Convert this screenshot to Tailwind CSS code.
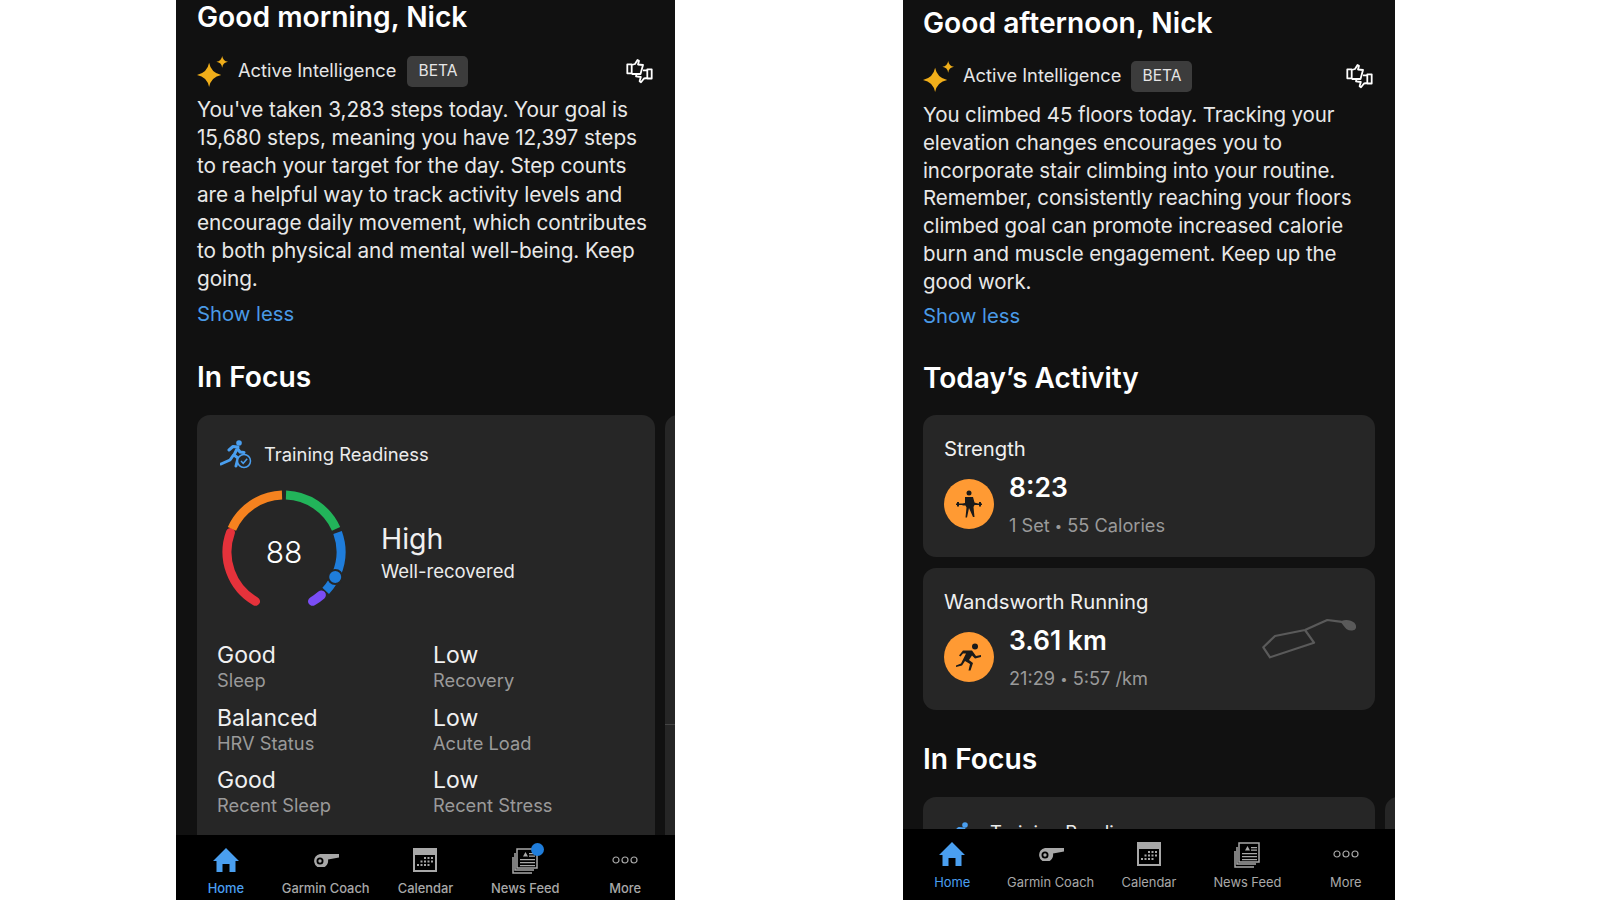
<!DOCTYPE html>
<html lang="en">
<head>
    <meta charset="UTF-8">
    <meta name="viewport" content="width=device-width, initial-scale=1.0">
    <title>Garmin Connect Active Intelligence</title>
    <script src="https://cdn.jsdelivr.net/npm/@tailwindcss/browser@4"></script>
</head>
<body class="bg-white font-['Inter',sans-serif] overflow-hidden">
    <!-- shared icons -->
    <svg class="hidden">
        <symbol id="sparkle" viewBox="0 0 32 32">
            <path fill="#f0ae1a" d="M12.500 7Q14.500 17.500 25 19.500Q14.500 21.500 12.500 32Q10.500 21.500 0 19.500Q10.500 17.500 12.500 7Z"/>
            <path fill="#f0ae1a" d="M26 0Q26.800 5.200 32 6Q26.800 6.800 26 12Q25.200 6.800 20 6Q25.200 5.200 26 0Z"/>
        </symbol>
        <symbol id="thumbs" viewBox="0 0 27 26">
            <g fill="none" stroke="#fff" stroke-width="1.800" stroke-linejoin="round">
                <path d="M1.300 6.300h4.400v9H1.300zM5.700 7 9 6l2.500-4 1.500.7-1 3.800 5 .5-2.500 9H5.700"/>
                <path d="M21.300 11.300h4.400v9.200h-4.400zM21.300 12.300H17M10.500 16.500l-.5 1.800 4.800.7-1.200 4.300 1.400 1 3-3.800 3.300-.5"/>
            </g>
        </symbol>
        <symbol id="home" viewBox="0 0 26 24">
            <path fill="#4a9ff0" d="M13 0 26 13h-3.500v11h-6v-8h-7v8h-6V13H0z"/>
        </symbol>
        <symbol id="whistle" viewBox="0 0 26 14">
            <path fill="#a8a8a8" fill-rule="evenodd" d="M7 1h19v3.500l-11 2A7 7 0 1 1 7 1ZM7 4.500a3.500 3.500 0 1 0 0 7 3.500 3.500 0 0 0 0-7ZM7 6.300a1.700 1.700 0 1 1 0 3.400 1.700 1.700 0 0 1 0-3.400Z"/>
        </symbol>
        <symbol id="calendar" viewBox="0 0 24 24">
            <path fill="#a8a8a8" d="M0 0h24v24H0z"/>
            <path fill="#000" d="M2 7h20v15H2z"/>
            <path fill="#a8a8a8" d="M11 9h2v2h-2zM14.500 9h2v2h-2zM18 9h2v2h-2zM7.500 12.500h2v2h-2zM11 12.500h2v2h-2zM14.500 12.500h2v2h-2zM18 12.500h2v2h-2zM4 16h2v2H4zM7.500 16h2v2h-2zM11 16h2v2h-2zM14.500 16h2v2h-2z"/>
        </symbol>
        <symbol id="news" viewBox="0 0 26 26">
            <path fill="none" stroke="#a8a8a8" stroke-width="1.500" d="M5 1h20v19H5z"/>
            <path fill="none" stroke="#a8a8a8" stroke-width="1.500" d="M3 5v17h19M1 9v16h19"/>
            <path fill="#a8a8a8" d="M11 8.500 13.500 4 16 8.500zM17 5h6v1.300h-6zM17 7.500h6v1.300h-6zM8 11h15v1.300H8zM8 14h15v1.300H8zM8 17h15v1.300H8z"/>
        </symbol>
        <symbol id="more" viewBox="0 0 26 8">
            <g fill="none" stroke="#a8a8a8" stroke-width="1.200"><circle cx="4" cy="4" r="3"/><circle cx="13" cy="4" r="3"/><circle cx="22" cy="4" r="3"/></g>
        </symbol>
        <symbol id="readiness" viewBox="0 0 32 29">
            <circle cx="19" cy="3" r="2.800" fill="#4a9ff0"/>
            <path fill="none" stroke="#4a9ff0" stroke-width="3" stroke-linejoin="round" stroke-linecap="round" d="M9 10 13 6.500 18 7l-4 8 4 3-2 8M13.500 15 10 20 1 24M17 8l3 4 4 .5"/>
            <circle cx="24" cy="21" r="6.500" fill="#262626" stroke="#4a9ff0" stroke-width="1.500"/>
            <path fill="none" stroke="#4a9ff0" stroke-width="1.500" d="m21 21 2.200 2.300 4-4.500"/>
        </symbol>
    </svg>

    <div class="flex h-[900px] w-[1600px] pl-[176px]">
        <!-- morning screen -->
        <div class="w-[499px] h-full bg-[#111111] flex flex-col overflow-hidden">
            <div class="h-[835px] overflow-hidden pl-[21px]">
                <h1 class="text-[28.200px] leading-[34px] font-semibold text-white mt-0">Good morning, Nick</h1>
                <div class="flex items-center w-[458px] mt-[22px] h-[30px]">
                    <svg class="w-[31px] h-[31px] mt-[1px]"><use href="#sparkle"/></svg>
                    <span class="ml-[10px] text-[18.300px] text-[#e6e6e6]">Active Intelligence</span>
                    <span class="ml-[11px] bg-[#3c3c3c] text-[#e6e6e6] text-[15.500px] rounded-[5px] w-[61px] h-[31px] flex items-center justify-center">BETA</span>
                    <svg class="w-[27px] h-[26px] ml-auto mr-[2px] -mt-[1px]"><use href="#thumbs"/></svg>
                </div>
                <p class="w-[458px] mt-[10px] text-[20.800px] tracking-[-0.1px] leading-[28.200px] text-[#e8e8e8]">You've taken 3,283 steps today. Your goal is<br>15,680 steps, meaning you have 12,397 steps<br>to reach your target for the day. Step counts<br>are a helpful way to track activity levels and<br>encourage daily movement, which contributes<br>to both physical and mental well-being. Keep<br>going.</p>
                <div class="mt-[7px] text-[20.300px] leading-[28px] text-[#4a9ae6]">Show less</div>
                <h2 class="mt-[31px] text-[28.200px] leading-[36px] font-semibold text-white">In Focus</h2>
                <div class="flex gap-[10px] mt-[20px]">
                    <div class="w-[458px] h-[450px] shrink-0 bg-[#262626] rounded-[13px]">
                        <div class="flex items-center pl-[23px] pt-[25px]">
                            <svg class="w-[32px] h-[29px]"><use href="#readiness"/></svg>
                            <span class="ml-[12px] text-[18.400px] text-[#ececec]">Training Readiness</span>
                        </div>
                        <div class="flex items-center mt-[18px] pl-[22px]">
                            <div class="relative w-[130px] h-[130px] flex items-center justify-center">
                                <svg class="absolute inset-0" viewBox="0 0 130 130" fill="none" stroke-width="9">
                                    <path stroke="#e5323b" stroke-linecap="round" d="M11.440 45.500A57 57 0 0 0 36.500 114.360"/>
                                    <path stroke="#f5821f" d="M12.930 41.820A57 57 0 0 1 63.010 8.030"/>
                                    <path stroke="#22b45a" d="M66.990 8.030A57 57 0 0 1 117.070 41.820"/>
                                    <path stroke="#1f7ddb" d="M118.560 45.500A57 57 0 0 1 117.470 87.270"/>
                                    <path stroke="#1f7ddb" d="M113.860 94.360A57 57 0 0 1 106.690 103.870"/>
                                    <path stroke="#7a4df5" stroke-linecap="round" d="M102.390 108.020A57 57 0 0 1 93.500 114.360"/>
                                    <circle cx="116.200" cy="90" r="7" fill="#1f7ddb" stroke="#262626" stroke-width="2"/>
                                </svg>
                                <span class="text-[30px] font-light text-white">88</span>
                            </div>
                            <div class="ml-[32px] mt-[4px]">
                                <div class="text-[28.500px] leading-[34px] text-[#f0f0f0]">High</div>
                                <div class="text-[18.500px] leading-[30px] text-[#ececec]">Well-recovered</div>
                            </div>
                        </div>
                        <div class="grid grid-cols-[216px_1fr] gap-y-[12.700px] pl-[20px] mt-[23.500px]">
                            <div><div class="text-[23px] leading-[28px] text-[#f0f0f0]">Good</div><div class="text-[18.300px] leading-[22px] text-[#9a9a9a]">Sleep</div></div>
                            <div><div class="text-[23px] leading-[28px] text-[#f0f0f0]">Low</div><div class="text-[18.300px] leading-[22px] text-[#9a9a9a]">Recovery</div></div>
                            <div><div class="text-[23px] leading-[28px] text-[#f0f0f0]">Balanced</div><div class="text-[18.300px] leading-[22px] text-[#9a9a9a]">HRV Status</div></div>
                            <div><div class="text-[23px] leading-[28px] text-[#f0f0f0]">Low</div><div class="text-[18.300px] leading-[22px] text-[#9a9a9a]">Acute Load</div></div>
                            <div><div class="text-[23px] leading-[28px] text-[#f0f0f0]">Good</div><div class="text-[18.300px] leading-[22px] text-[#9a9a9a]">Recent Sleep</div></div>
                            <div><div class="text-[23px] leading-[28px] text-[#f0f0f0]">Low</div><div class="text-[18.300px] leading-[22px] text-[#9a9a9a]">Recent Stress</div></div>
                        </div>
                    </div>
                    <div class="w-[40px] h-[450px] shrink-0 bg-[#262626] rounded-[13px] pt-[309px]"><div class="h-px bg-[#444444]"></div></div>
                </div>
            </div>
            <nav class="h-[65px] bg-black grid grid-cols-5 pt-[13px]">
                <div class="flex flex-col items-center"><svg class="w-[26px] h-[24px]"><use href="#home"/></svg><span class="mt-[7px] text-[12.900px] font-medium text-[#4a9ff0]">Home</span></div>
                <div class="flex flex-col items-center"><svg class="w-[26px] h-[14px] mt-[5px] mb-[5px]"><use href="#whistle"/></svg><span class="mt-[7px] text-[12.900px] font-medium text-[#a8a8a8]">Garmin Coach</span></div>
                <div class="flex flex-col items-center"><svg class="w-[24px] h-[24px]"><use href="#calendar"/></svg><span class="mt-[7px] text-[12.900px] font-medium text-[#a8a8a8]">Calendar</span></div>
                <div class="relative flex flex-col items-center"><svg class="w-[26px] h-[26px] -mb-[2px]"><use href="#news"/></svg><span class="absolute left-[56px] -top-[5px] w-[13px] h-[13px] rounded-full bg-[#1f7ddb]"></span><span class="mt-[7px] text-[12.900px] font-medium text-[#a8a8a8]">News Feed</span></div>
                <div class="flex flex-col items-center"><svg class="w-[26px] h-[8px] mt-[8px] mb-[8px]"><use href="#more"/></svg><span class="mt-[7px] text-[12.900px] font-medium text-[#a8a8a8]">More</span></div>
            </nav>
        </div>

        <!-- afternoon screen -->
        <div class="w-[492px] h-full ml-[228px] bg-[#111111] flex flex-col overflow-hidden">
            <div class="h-[829px] overflow-hidden pl-[20px]">
                <h1 class="text-[28.200px] leading-[34px] font-semibold text-white mt-[6px]">Good afternoon, Nick</h1>
                <div class="flex items-center w-[452px] mt-[21px] h-[30px]">
                    <svg class="w-[31px] h-[31px] mt-[1px]"><use href="#sparkle"/></svg>
                    <span class="ml-[9px] text-[18.300px] text-[#e6e6e6]">Active Intelligence</span>
                    <span class="ml-[10px] bg-[#3c3c3c] text-[#e6e6e6] text-[15.500px] rounded-[5px] w-[61px] h-[31px] flex items-center justify-center">BETA</span>
                    <svg class="w-[27px] h-[26px] ml-auto mr-[2px] -mt-[1px]"><use href="#thumbs"/></svg>
                </div>
                <p class="w-[452px] mt-[10px] text-[20.500px] tracking-[-0.1px] leading-[27.800px] text-[#e8e8e8]">You climbed 45 floors today. Tracking your<br>elevation changes encourages you to<br>incorporate stair climbing into your routine.<br>Remember, consistently reaching your floors<br>climbed goal can promote increased calorie<br>burn and muscle engagement. Keep up the<br>good work.</p>
                <div class="mt-[6px] text-[20.300px] leading-[28px] text-[#4a9ae6]">Show less</div>
                <h2 class="mt-[30px] text-[28px] leading-[36px] font-semibold text-white">Today’s Activity</h2>
                <div class="mt-[19px] w-[452px] flex flex-col gap-[11px]">
                    <div class="h-[142px] bg-[#262626] rounded-[13px] pl-[21px] pt-[21px]">
                        <div class="text-[20.300px] leading-[26px] text-[#f0f0f0]">Strength</div>
                        <div class="flex items-center mt-[7px]">
                            <div class="w-[50px] h-[50px] rounded-full bg-[#ff9a33] flex items-center justify-center">
                                <svg class="w-[26px] h-[28px]" viewBox="0 0 26 28" fill="#1a1a1a">
                                    <circle cx="13" cy="3" r="2.500"/>
                                    <path d="M9 7h8l1.500 5.500 3 1v1.500h-3l-1 2 1 10h-1.500L13 18h0l-2 9.500H9.500l1-10-1-2h-3V14l2.500-1z"/>
                                    <path d="M0 13.500h1v-1.500h2v1.500h20v-1.500h2v1.500h1v1.500h-1v1.500h-2V15H3v1.500H1V15H0z"/>
                                </svg>
                            </div>
                            <div class="ml-[15px]">
                                <div class="text-[26.500px] leading-[36px] font-semibold text-white">8:23</div>
                                <div class="mt-[7px] text-[18.200px] leading-[26px] text-[#9a9a9a]">1 Set <span class="text-[13px] align-[1px]">•</span> 55 Calories</div>
                            </div>
                        </div>
                    </div>
                    <div class="relative h-[142px] bg-[#262626] rounded-[13px] pl-[21px] pt-[21px]">
                        <div class="text-[20.300px] leading-[26px] text-[#f0f0f0]">Wandsworth Running</div>
                        <div class="flex items-center mt-[7px]">
                            <div class="w-[50px] h-[50px] rounded-full bg-[#ff9a33] flex items-center justify-center">
                                <svg class="w-[26px] h-[28px]" viewBox="0 0 26 28" fill="#1a1a1a">
                                    <circle cx="19" cy="3.500" r="3"/>
                                    <path d="M7 7.500h9l4 5.500 5-1v2l-6 1.500-3-3-3 4.500 4 3-2.500 7.500h-2l1.500-6.500-5-3-3 4.500-6 1.500v-1.500l5-2 5-10h-3l-2.500 3-1.500-1z"/>
                                </svg>
                            </div>
                            <div class="ml-[15px]">
                                <div class="text-[26.500px] leading-[36px] font-semibold text-white">3.61 km</div>
                                <div class="mt-[7px] text-[18.200px] leading-[26px] text-[#9a9a9a]">21:29 <span class="text-[13px] align-[1px]">•</span> 5:57 /km</div>
                            </div>
                        </div>
                        <svg class="absolute left-[339px] top-[49px] w-[94px] h-[44px]" viewBox="0 0 94 44" fill="none" stroke="#5a5a5a" stroke-width="2.200" stroke-linejoin="round">
                            <path d="M1.300 30.300 13 19l30-6 9 12.700-44 14.600zM43 13l13.300-6 9-4 12.700 1.700 10 1.600"/>
                            <path d="M80 5C85 3 93 5 93 10 93 13 88 13 85 11 83 9 82 7 80 5Z" fill="#5a5a5a"/>
                        </svg>
                    </div>
                </div>
                <h2 class="mt-[31px] text-[28.200px] leading-[36px] font-semibold text-white">In Focus</h2>
                <div class="flex gap-[10px] mt-[20px]">
                    <div class="w-[452px] h-[60px] shrink-0 bg-[#262626] rounded-[13px]">
                        <div class="flex items-center pl-[23px] pt-[25px]">
                            <svg class="w-[32px] h-[29px]"><use href="#readiness"/></svg>
                            <span class="ml-[12px] -translate-y-[3px] text-[18.400px] text-[#ececec]">Training Readiness</span>
                        </div>
                    </div>
                    <div class="w-[40px] h-[60px] shrink-0 bg-[#262626] rounded-[13px]"></div>
                </div>
            </div>
            <nav class="h-[71px] bg-black grid grid-cols-5 pt-[13px]">
                <div class="flex flex-col items-center"><svg class="w-[26px] h-[24px]"><use href="#home"/></svg><span class="mt-[7px] text-[12.900px] text-[#4a9ff0]">Home</span></div>
                <div class="flex flex-col items-center"><svg class="w-[26px] h-[14px] mt-[5px] mb-[5px]"><use href="#whistle"/></svg><span class="mt-[7px] text-[12.900px] text-[#a8a8a8]">Garmin Coach</span></div>
                <div class="flex flex-col items-center"><svg class="w-[24px] h-[24px]"><use href="#calendar"/></svg><span class="mt-[7px] text-[12.900px] text-[#a8a8a8]">Calendar</span></div>
                <div class="flex flex-col items-center"><svg class="w-[26px] h-[26px] -mb-[2px]"><use href="#news"/></svg><span class="mt-[7px] text-[12.900px] text-[#a8a8a8]">News Feed</span></div>
                <div class="flex flex-col items-center"><svg class="w-[26px] h-[8px] mt-[8px] mb-[8px]"><use href="#more"/></svg><span class="mt-[7px] text-[12.900px] text-[#a8a8a8]">More</span></div>
            </nav>
        </div>
    </div>
</body>
</html>
